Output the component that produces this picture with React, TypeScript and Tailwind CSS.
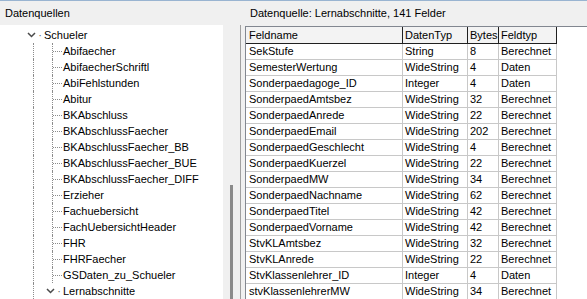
import React from "react";

type Field = { name: string; type: string; bytes: string; kind: string };

const fields: Field[] = [
  { name: "SekStufe", type: "String", bytes: "8", kind: "Berechnet" },
  { name: "SemesterWertung", type: "WideString", bytes: "4", kind: "Daten" },
  { name: "Sonderpaedagoge_ID", type: "Integer", bytes: "4", kind: "Daten" },
  { name: "SonderpaedAmtsbez", type: "WideString", bytes: "32", kind: "Berechnet" },
  { name: "SonderpaedAnrede", type: "WideString", bytes: "22", kind: "Berechnet" },
  { name: "SonderpaedEmail", type: "WideString", bytes: "202", kind: "Berechnet" },
  { name: "SonderpaedGeschlecht", type: "WideString", bytes: "4", kind: "Berechnet" },
  { name: "SonderpaedKuerzel", type: "WideString", bytes: "22", kind: "Berechnet" },
  { name: "SonderpaedMW", type: "WideString", bytes: "34", kind: "Berechnet" },
  { name: "SonderpaedNachname", type: "WideString", bytes: "62", kind: "Berechnet" },
  { name: "SonderpaedTitel", type: "WideString", bytes: "42", kind: "Berechnet" },
  { name: "SonderpaedVorname", type: "WideString", bytes: "42", kind: "Berechnet" },
  { name: "StvKLAmtsbez", type: "WideString", bytes: "32", kind: "Berechnet" },
  { name: "StvKLAnrede", type: "WideString", bytes: "22", kind: "Berechnet" },
  { name: "StvKlassenlehrer_ID", type: "Integer", bytes: "4", kind: "Daten" },
  { name: "stvKlassenlehrerMW", type: "WideString", bytes: "34", kind: "Berechnet" },
];

const children = [
  "Abifaecher",
  "AbifaecherSchriftl",
  "AbiFehlstunden",
  "Abitur",
  "BKAbschluss",
  "BKAbschlussFaecher",
  "BKAbschlussFaecher_BB",
  "BKAbschlussFaecher_BUE",
  "BKAbschlussFaecher_DIFF",
  "Erzieher",
  "Fachuebersicht",
  "FachUebersichtHeader",
  "FHR",
  "FHRFaecher",
  "GSDaten_zu_Schueler",
];

function Chevron() {
  return (
    <svg width="9" height="6" viewBox="0 0 9 6" className="block">
      <polyline points="1,1 4.5,4.5 8,1" fill="none" stroke="#4a4a4a" strokeWidth="1.5" />
    </svg>
  );
}

function TreeChild({ label }: { label: string }) {
  return (
    <div className="flex h-4 items-stretch">
      <div className="w-[33px] shrink-0" />
      <div className="w-[19px] shrink-0 border-l border-dotted border-[#8c8c8c]" />
      <div className="w-[10px] shrink-0 border-l border-dotted border-[#8c8c8c] flex items-center">
        <div className="w-[9px] border-t border-dotted border-[#8c8c8c]" />
      </div>
      <span className="pl-[1px] leading-4 whitespace-nowrap">{label}</span>
    </div>
  );
}

export default function App() {
  return (
    <div className="w-[587px] h-[299px] overflow-hidden bg-[#f0f0f0] border-t border-[#99b4d1] text-black text-[11px] font-['Liberation_Sans',Arial,sans-serif] flex">
      {/* Datenquellen */}
      <div className="w-[241px] shrink-0 flex flex-col">
        <div className="h-[24px] shrink-0 flex items-center pl-[5px]">Datenquellen</div>
        <div className="flex-1 flex bg-white border-r border-[#a0a0a0] overflow-hidden">
          <div className="w-[223px] shrink-0 pt-[2px] overflow-hidden">
            <div className="flex h-4 items-center">
              <div className="w-[27px] shrink-0" />
              <Chevron />
              <span className="w-[8px] text-center leading-4 text-[#666]">·</span>
              <span className="leading-4">Schueler</span>
            </div>
            {children.map((c) => (
              <TreeChild key={c} label={c} />
            ))}
            <div className="flex h-4 items-stretch">
              <div className="w-[33px] shrink-0" />
              <div className="w-[13px] shrink-0 border-l border-dotted border-[#8c8c8c]" />
              <div className="flex items-center w-[9px] shrink-0 bg-white">
                <Chevron />
              </div>
              <span className="w-[8px] text-center leading-4 text-[#666]">·</span>
              <span className="leading-4">Lernabschnitte</span>
            </div>
          </div>
          <div className="w-[17px] shrink-0 bg-[#f0f0f0] flex flex-col">
            <div className="h-[160px] shrink-0" />
            <div className="ml-[7px] w-[3px] flex-1 bg-[#8a8a8a]" />
          </div>
        </div>
      </div>

      {/* Felder */}
      <div className="flex-1 flex flex-col min-w-0">
        <div className="h-[25px] shrink-0 flex items-center pl-[9px] whitespace-nowrap">
          Datenquelle: Lernabschnitte, 141 Felder
        </div>
        <div className="flex-1 ml-[4px] bg-white border-l border-t border-[#828790] overflow-hidden">
          <div className="flex h-[17px] border-b border-[#202020] w-[311px] bg-[#f3f3f3]">
            <div className="w-[157px] pl-[3px] border-r border-[#202020] leading-4">Feldname</div>
            <div className="w-[65px] pl-[2px] border-r border-[#202020] leading-4">DatenTyp</div>
            <div className="w-[31px] pl-[2px] border-r border-[#202020] leading-4">Bytes</div>
            <div className="w-[58px] pl-[2px] border-r border-[#202020] leading-4">Feldtyp</div>
          </div>
          {fields.map((f) => (
            <div key={f.name} className="flex h-4 w-[311px] border-b border-[#c8c8c8]">
              <div className="w-[157px] pl-[3px] border-r border-[#c8c8c8] leading-[15px] whitespace-nowrap">{f.name}</div>
              <div className="w-[65px] pl-[2px] border-r border-[#c8c8c8] leading-[15px]">{f.type}</div>
              <div className="w-[31px] pl-[2px] border-r border-[#c8c8c8] leading-[15px]">{f.bytes}</div>
              <div className="w-[58px] pl-[2px] border-r border-[#c8c8c8] leading-[15px]">{f.kind}</div>
            </div>
          ))}
        </div>
      </div>
    </div>
  );
}
